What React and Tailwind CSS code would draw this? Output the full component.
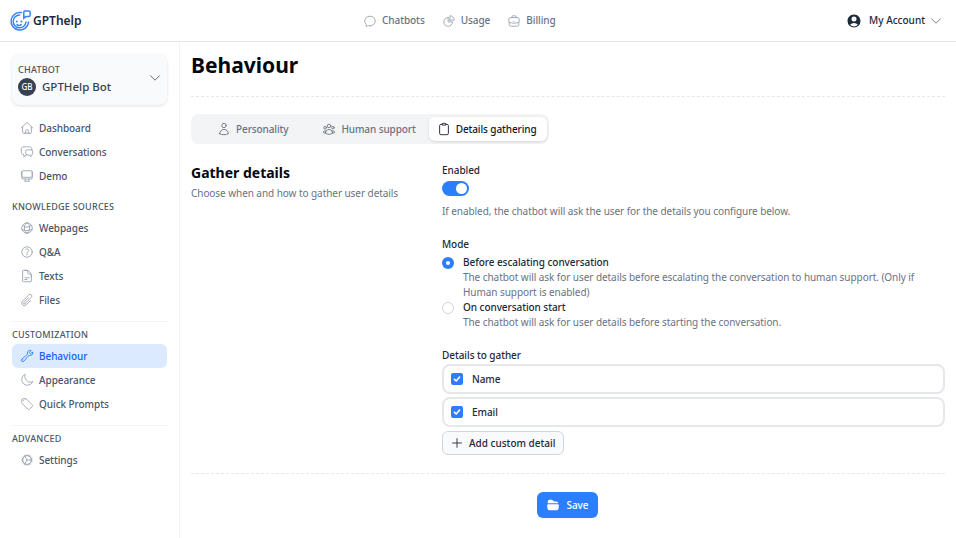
import React from "react";
import {
  HiOutlineHome,
  HiOutlineChatBubbleLeftRight,
  HiOutlineComputerDesktop,
  HiOutlineGlobeAlt,
  HiOutlineQuestionMarkCircle,
  HiOutlineDocumentText,
  HiOutlinePaperClip,
  HiOutlineWrench,
  HiOutlineMoon,
  HiOutlineTag,
  HiOutlineCog,
  HiOutlineUser,
  HiOutlineUserGroup,
  HiOutlineClipboard,
  HiOutlineChatBubbleOvalLeft,
  HiOutlineChartPie,
  HiOutlineBriefcase,
  HiUserCircle,
  HiFolderOpen,
  HiOutlineChevronDown,
  HiOutlinePlus,
} from "react-icons/hi2";

function Logo() {
  return (
    <svg width="22" height="22" viewBox="0 0 22 22" fill="none" stroke="#3b82f6" strokeWidth="1.5" strokeLinecap="round">
      <path d="M12.5 2.6 A8.8 8.8 0 1 0 19.6 12" />
      <path d="M10.6 5 A6.4 6.4 0 1 0 17 12" />
      <circle cx="7.8" cy="11.4" r="1" fill="#3b82f6" stroke="none" />
      <circle cx="12.4" cy="11.4" r="1" fill="#3b82f6" stroke="none" />
      <path d="M8 14.6 Q10.1 16.2 12.2 14.6" />
      <path d="M15.6 1 h4 a1.6 1.6 0 0 1 1.6 1.6 v2.4 a1.6 1.6 0 0 1 -1.6 1.6 h-2.6 l-2.2 1.6 v-5.6 a1.6 1.6 0 0 1 .8 -1.6 z" />
    </svg>
  );
}

function NavItem({ icon: Icon, label, active }) {
  return (
    <div
      className={`flex h-6 items-center gap-[5px] rounded-md pl-[8px] text-[10px] font-medium tracking-[-0.06px] ${
        active ? "bg-blue-100 text-blue-600" : "text-gray-600"
      }`}
    >
      <Icon className={`h-[14px] w-[14px] shrink-0 ${active ? "text-blue-500" : "text-gray-400"}`} />
      {label}
    </div>
  );
}

function SectionLabel({ children }) {
  return <div className="mb-[1px] flex h-4 items-center text-[9px] font-medium tracking-wide text-gray-600">{children}</div>;
}

function Tab({ icon: Icon, label, active, className }) {
  return (
    <div
      className={`flex h-6 items-center gap-[5px] whitespace-nowrap rounded-md text-[10px] font-medium tracking-[-0.1px] ${
        active ? "bg-white pl-[8px] pr-[10px] text-gray-900 shadow-sm" : "text-gray-500"
      } ${className || ""}`}
    >
      <Icon className={`h-[14px] w-[14px] ${active ? "text-gray-900" : "text-gray-500"}`} />
      {label}
    </div>
  );
}

function DetailRow({ label }) {
  return (
    <div className="flex h-[30px] items-center gap-[9px] rounded-lg border-2 border-gray-200 pl-[7px] text-[10px] font-medium tracking-[-0.06px] text-gray-800">
      <span className="flex h-3 w-3 items-center justify-center rounded-[2px] bg-blue-500">
        <svg width="8" height="8" viewBox="0 0 8 8" fill="none" stroke="white" strokeWidth="1.6" strokeLinecap="round" strokeLinejoin="round">
          <path d="M1.4 4.2 3.2 6 6.6 2" />
        </svg>
      </span>
      {label}
    </div>
  );
}

export default function App() {
  return (
    <div className="flex h-[538px] w-[956px] flex-col overflow-hidden bg-white font-['Noto_Sans',sans-serif] text-gray-900">
      {/* top bar */}
      <header className="relative flex h-[42px] shrink-0 items-center justify-between border-b border-gray-200 pl-[9px] pr-[13px]">
        <div className="flex items-center gap-[2px] text-[12px] font-semibold text-gray-800">
          <Logo />
          GPThelp
        </div>
        <nav className="absolute left-[363px] flex items-center gap-[17px] text-[10px] font-medium tracking-[-0.06px] text-gray-500">
          <span className="flex items-center gap-[5px]">
            <HiOutlineChatBubbleOvalLeft className="h-[14px] w-[14px] text-gray-400" />
            Chatbots
          </span>
          <span className="flex items-center gap-[5px]">
            <HiOutlineChartPie className="h-[14px] w-[14px] text-gray-400" />
            Usage
          </span>
          <span className="flex items-center gap-[5px]">
            <HiOutlineBriefcase className="h-[14px] w-[14px] text-gray-400" />
            Billing
          </span>
        </nav>
        <div className="flex items-center gap-[4px] text-[10px] font-medium text-gray-800">
          <HiUserCircle className="mr-[3px] h-4 w-4 text-gray-800" />
          My Account
          <HiOutlineChevronDown className="h-[14px] w-[14px] text-gray-500" />
        </div>
      </header>

      <div className="flex min-h-0 flex-1">
        {/* sidebar */}
        <aside className="w-[180px] shrink-0 border-r border-gray-100 px-3 pt-3">
          <div className="flex h-[51px] items-center justify-between rounded-lg bg-gray-50 pl-[6px] pr-[5px] shadow-[0_1px_3px_rgba(0,0,0,0.12)]">
            <div>
              <div className="text-[9px] font-medium leading-[12px] tracking-wide text-gray-600">CHATBOT</div>
              <div className="mt-[2px] flex items-center gap-[6px]">
                <span className="flex h-[18px] w-[18px] items-center justify-center rounded-full bg-gray-700 text-[8px] font-medium text-white">GB</span>
                <span className="text-[11.5px] font-medium text-gray-700">GPTHelp Bot</span>
              </div>
            </div>
            <HiOutlineChevronDown className="mb-[3px] h-[14px] w-[14px] text-gray-600" />
          </div>

          <div className="mt-[11px]">
            <NavItem icon={HiOutlineHome} label="Dashboard" />
            <NavItem icon={HiOutlineChatBubbleLeftRight} label="Conversations" />
            <NavItem icon={HiOutlineComputerDesktop} label="Demo" />
          </div>

          <div className="mt-[11px]">
            <SectionLabel>KNOWLEDGE SOURCES</SectionLabel>
            <NavItem icon={HiOutlineGlobeAlt} label="Webpages" />
            <NavItem icon={HiOutlineQuestionMarkCircle} label="Q&A" />
            <NavItem icon={HiOutlineDocumentText} label="Texts" />
            <NavItem icon={HiOutlinePaperClip} label="Files" />
          </div>

          <div className="mt-[9px] border-t border-gray-100 pt-[5px]">
            <SectionLabel>CUSTOMIZATION</SectionLabel>
            <NavItem icon={HiOutlineWrench} label="Behaviour" active />
            <NavItem icon={HiOutlineMoon} label="Appearance" />
            <NavItem icon={HiOutlineTag} label="Quick Prompts" />
          </div>

          <div className="mt-[9px] border-t border-gray-100 pt-[5px]">
            <SectionLabel>ADVANCED</SectionLabel>
            <NavItem icon={HiOutlineCog} label="Settings" />
          </div>
        </aside>

        {/* main */}
        <main className="min-w-0 flex-1 pl-[11px] pr-[11px]">
          <h1 className="flex h-[48px] items-center text-[21px] font-bold text-gray-950">Behaviour</h1>
          <div className="mt-[6px] border-t border-dashed border-gray-200" />

          <div className="mt-[17px] flex h-[30px] w-[358px] items-center rounded-lg bg-gray-100 pl-[26px]">
            <Tab icon={HiOutlineUser} label="Personality" />
            <Tab icon={HiOutlineUserGroup} label="Human support" className="ml-[34px]" />
            <Tab icon={HiOutlineClipboard} label="Details gathering" active className="ml-[13px]" />
          </div>

          <div className="mt-[19px] flex">
            <div className="w-[251px] shrink-0">
              <h2 className="text-[14px] font-bold leading-[20px] text-gray-950">Gather details</h2>
              <p className="mt-[2px] text-[10px] leading-[16px] tracking-[-0.06px] text-gray-500">Choose when and how to gather user details</p>
            </div>

            <div className="min-w-0 flex-1">
              <div className="text-[10px] font-medium leading-[15px] tracking-[-0.06px] text-gray-800">Enabled</div>
              <div className="mt-[3px] flex h-[15px] w-[27px] items-center justify-end rounded-full bg-blue-500 pr-[2px]">
                <span className="h-[11px] w-[11px] rounded-full bg-white" />
              </div>
              <p className="mt-[7px] text-[10px] leading-[16px] tracking-[-0.06px] text-gray-500">If enabled, the chatbot will ask the user for the details you configure below.</p>

              <div className="mt-[18px] text-[10px] font-medium leading-[15px] tracking-[-0.06px] text-gray-800">Mode</div>
              <div className="mt-[3px] flex gap-[9px]">
                <span className="mt-[2px] flex h-3 w-3 shrink-0 items-center justify-center rounded-full bg-blue-500">
                  <span className="h-1 w-1 rounded-full bg-white" />
                </span>
                <div>
                  <div className="text-[10px] font-medium leading-[15px] tracking-[-0.06px] text-gray-800">Before escalating conversation</div>
                  <p className="text-[10px] leading-[15px] tracking-[-0.06px] text-gray-500">
                    The chatbot will ask for user details before escalating the conversation to human support. (Only if Human support is enabled)
                  </p>
                </div>
              </div>
              <div className="flex gap-[9px]">
                <span className="mt-[2px] h-3 w-3 shrink-0 rounded-full border border-gray-300 bg-white" />
                <div>
                  <div className="text-[10px] font-medium leading-[15px] tracking-[-0.06px] text-gray-800">On conversation start</div>
                  <p className="text-[10px] leading-[15px] tracking-[-0.06px] text-gray-500">The chatbot will ask for user details before starting the conversation.</p>
                </div>
              </div>

              <div className="mt-[18px] text-[10px] font-medium leading-[15px] tracking-[-0.06px] text-gray-800">Details to gather</div>
              <div className="mt-[1px] flex flex-col gap-[3px]">
                <DetailRow label="Name" />
                <DetailRow label="Email" />
              </div>
              <button className="mt-[4px] flex h-6 items-center gap-[5px] rounded-md border border-gray-300 bg-gray-50 pl-[7px] pr-[7px] text-[10px] font-medium text-gray-800">
                <HiOutlinePlus className="h-[14px] w-[14px]" />
                Add custom detail
              </button>
            </div>
          </div>

          <div className="mt-[18px] border-t border-dashed border-gray-200" />
          <div className="mt-[18px] flex justify-center pr-[2px]">
            <button className="flex h-[26px] w-[61px] items-center justify-center gap-[7px] rounded-md bg-blue-500 text-[10px] font-medium tracking-[-0.06px] text-white">
              <HiFolderOpen className="h-[14px] w-[14px]" />
              Save
            </button>
          </div>
        </main>
      </div>
    </div>
  );
}
